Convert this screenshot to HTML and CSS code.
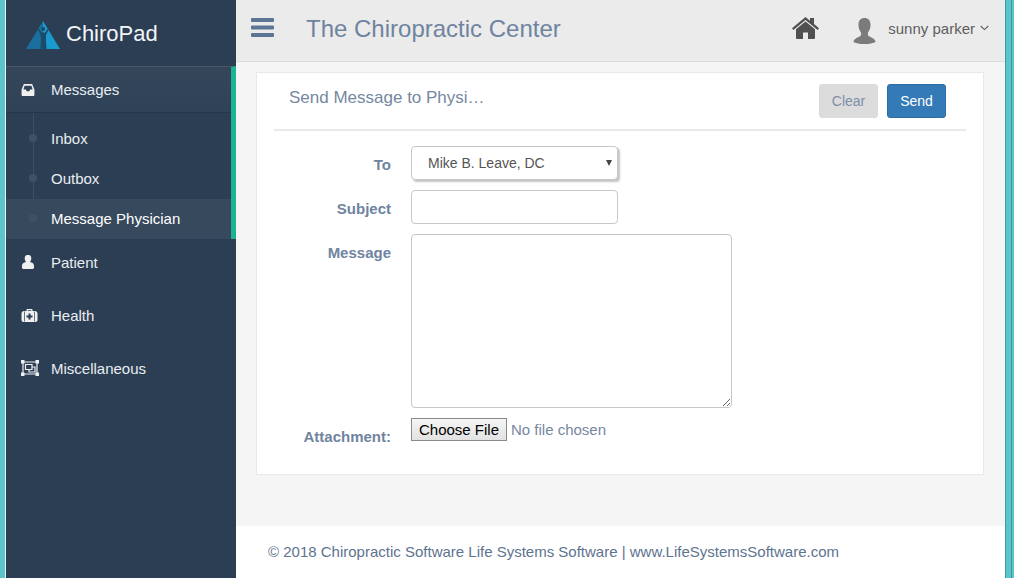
FILE: index.html
```html
<!DOCTYPE html>
<html lang="en">
<head>
<meta charset="utf-8">
<title>ChiroPad</title>
<link rel="stylesheet" href="styles.css">
</head>
<body>
<div class="desktop">
  <div class="edge edge-left"></div>
  <aside class="sidebar">
    <div class="brand">
      <svg class="logo" viewBox="0 0 34 28" aria-hidden="true">
        <path d="M17 0L34 28H16z" fill="#1a9bd0"/>
        <path d="M17 0L0 28H17z" fill="#1a6f9f"/>
        <circle cx="17.200" cy="8" r="1.900" fill="#1d4a68"/>
        <path d="M12.500 7L15.500 11.500H19L22.500 7L23 8L20 14L20 19L20.500 28H14.500L15 19L14.500 14L12 8Z" fill="#1d4a68"/>
      </svg>
      <span class="brand-name">ChiroPad</span>
    </div>
    <nav>
      <div class="group">
        <a class="item item-open">
          <svg class="icon icon-inbox" viewBox="0 0 16 14" aria-hidden="true"><path fill-rule="evenodd" d="M3.200 0H12.800L15.500 6.500V12.500C15.500 13.300 14.900 14 14 14H2C1.100 14 .5 13.300 .5 12.500V6.500ZM4 2L2.600 6.500H5.500L6.500 8.500H9.500L10.500 6.500H13.400L12 2Z" fill="#f0f0f0"/></svg>
          <span>Messages</span>
        </a>
        <div class="sub">
          <a class="sub-item"><i class="dot"></i><span>Inbox</span></a>
          <a class="sub-item"><i class="dot"></i><span>Outbox</span></a>
          <a class="sub-item sub-active"><i class="dot"></i><span>Message Physician</span></a>
        </div>
      </div>
      <a class="item">
        <svg class="icon" viewBox="0 0 16 14" aria-hidden="true"><path d="M6.200 0H7.800C9.500 0 10.300 1.500 10.300 3.200C10.300 5 9.600 6.300 8.800 7C11.500 7.300 13 8.500 13 11V12.500C13 13.400 12.300 14 11.500 14H2.500C1.700 14 1 13.400 1 12.500V11C1 8.500 2.500 7.300 5.200 7C4.400 6.300 3.700 5 3.700 3.200C3.700 1.500 4.500 0 6.200 0Z" fill="#f0f0f0"/></svg>
        <span>Patient</span>
      </a>
      <a class="item">
        <svg class="icon icon-health" viewBox="0 0 16 13" aria-hidden="true"><path fill-rule="evenodd" d="M5 2V1C5 .4 5.400 0 6 0H10C10.600 0 11 .4 11 1V2H13.500C14.900 2 16 3 16 4.500V11C16 12.200 15 13 14 13H2C1 13 0 12.200 0 11V4.500C0 3 1.100 2 2.500 2ZM6.200 1.200V2H9.800V1.200ZM7 4.500V6.500H5V8.500H7V10.500H9V8.500H11V6.500H9V4.500ZM2.800 2.500V12.500H3.500V2.500ZM12.500 2.500V12.500H13.200V2.500Z" fill="#f0f0f0"/></svg>
        <span>Health</span>
      </a>
      <a class="item">
        <svg class="icon icon-wide" viewBox="0 0 18 16" aria-hidden="true"><path fill="none" stroke="#f0f0f0" stroke-width="1.200" d="M2 2H16V14H2ZM4.500 4.500H11V9.500H4.500ZM8 9.500V12H14V7H11"/><path fill="#f0f0f0" d="M0 0H3.500V3.500H0ZM14.500 0H18V3.500H14.500ZM0 12.500H3.500V16H0ZM14.500 12.500H18V16H14.500Z"/></svg>
        <span>Miscellaneous</span>
      </a>
    </nav>
  </aside>
  <div class="main">
    <header class="topbar">
      <svg class="burger" viewBox="0 0 23 19" aria-hidden="true"><path d="M1 0H22A1 1 0 0 1 23 1V3A1 1 0 0 1 22 4H1A1 1 0 0 1 0 3V1A1 1 0 0 1 1 0ZM1 7.500H22A1 1 0 0 1 23 8.500V10.500A1 1 0 0 1 22 11.500H1A1 1 0 0 1 0 10.500V8.500A1 1 0 0 1 1 7.500ZM1 15H22A1 1 0 0 1 23 16V18A1 1 0 0 1 22 19H1A1 1 0 0 1 0 18V16A1 1 0 0 1 1 15Z" fill="#5b7695"/></svg>
      <h1 class="clinic">The Chiropractic Center</h1>
      <svg class="home" viewBox="0 0 27 22" aria-hidden="true"><path d="M13.500 4.500L4 12.300V21A1 1 0 0 0 5 22H11V15.500H16V22H22A1 1 0 0 0 23 21V12.300Z" fill="#505050"/><path d="M13.500 0L18 3.800V1H22V7.100L27 11.300L25.600 13L13.500 3L1.400 13L0 11.300Z" fill="#505050"/></svg>
      <div class="user">
        <svg class="avatar" viewBox="0 0 24 28" aria-hidden="true"><path d="M12 0C16 0 18.500 2.800 18.500 7.500C18.500 11 17.200 13.500 15.800 15.500C15.500 17 15.600 18.500 16.500 19.500C18.500 21 23 22 24 25.500C22 27 17 28 12 28C7 28 2 27 0 25.500C1 22 5.500 21 7.500 19.500C8.400 18.500 8.500 17 8.200 15.500C6.800 13.500 5.500 11 5.500 7.500C5.500 2.800 8 0 12 0Z" fill="#7b7b7b"/></svg>
        <span class="user-name">sunny parker</span>
        <svg class="caret" viewBox="0 0 9 6" aria-hidden="true"><path d="M.7 1L4.500 4.600L8.300 1" fill="none" stroke="#5e5e5e" stroke-width="1.100"/></svg>
      </div>
    </header>
    <main class="content">
      <section class="card">
        <div class="card-head">
          <h2 class="card-title">Send Message to Physi…</h2>
          <div class="actions">
            <button class="btn btn-clear" type="button">Clear</button>
            <button class="btn btn-send" type="button">Send</button>
          </div>
        </div>
        <form class="form">
          <label class="label">To</label>
          <div class="select-wrap"><select class="field field-select"><option>Mike B. Leave, DC</option></select></div>
          <label class="label">Subject</label>
          <input class="field field-input" type="text">
          <label class="label label-msg">Message</label>
          <textarea class="field field-area"></textarea>
          <label class="label label-file">Attachment:</label>
          <input class="file" type="file">
        </form>
      </section>
    </main>
    <footer class="footer">© 2018 Chiropractic Software Life Systems Software | www.LifeSystemsSoftware.com</footer>
  </div>
  <div class="edge edge-right"></div>
</div>
</body>
</html>
```

FILE: styles.css
```css
* { box-sizing: border-box; }
html, body { margin: 0; height: 100%; overflow: hidden; }
body { font-family: "Liberation Sans", Arial, sans-serif; font-size: 14px; color: #676a6c; background: #fff; }
.desktop { display: flex; height: 578px; }
.edge { flex: none; }
.edge-left { width: 6px; background: linear-gradient(to right, #5cc5cb 0, #5cc5cb 5px, #e8f4f5 5px); }
.edge-right { width: 9px; background: linear-gradient(to right, #3d9aa0 0, #3d9aa0 1px, #5cc5cb 1px, #5cc5cb 6px, #3d9aa0 6px, #3d9aa0 7px, #5cc5cb 7px); }

.sidebar { flex: none; width: 230px; background: #2c3e53; color: #e8edf2; }
.brand { height: 66px; display: flex; align-items: flex-start; padding: 21px 0 0 20px; }
.logo { width: 34px; height: 28px; flex: none; }
.brand-name { margin-left: 6px; font-size: 22px; line-height: 25px; color: #f2f5f8; }
nav { display: flex; flex-direction: column; gap: 7px; }
.group { border-right: 5px solid #1ab394; border-top: 1px solid #49596b; }
.item { display: flex; align-items: center; height: 46px; padding-left: 15px; font-size: 15px; color: #e8edf2; }
.item span { margin-left: 14px; }
.item-open { background: linear-gradient(to bottom, #354659, #2e4258); border-bottom: 1px solid #243649; }
nav > .item:nth-child(2) { margin-top: -7px; }
.icon { width: 16px; height: 14px; flex: none; }
.icon-inbox { width: 14px; height: 12px; margin-right: 2px; }
.icon-health { width: 17px; height: 13px; margin-right: -1px; }
.icon-wide { width: 18px; height: 16px; margin-right: -2px; }
.sub { position: relative; padding-top: 6px; }
.sub::before { content: ""; position: absolute; left: 27px; top: 0; bottom: 0; width: 1px; background: #3c4f64; }
.sub-item { position: relative; display: flex; align-items: center; height: 40px; padding: 0 0 2px 45px; font-size: 15px; color: #e8edf2; }
.sub-active { background: #36495d; color: #fff; }
.dot { position: absolute; left: 23px; top: 15px; width: 8px; height: 8px; border-radius: 50%; background: #3f5165; }

.main { flex: 1; min-width: 0; display: flex; flex-direction: column; background: #f5f5f5; }
.topbar { flex: none; height: 62px; display: flex; align-items: flex-start; background: #ebebeb; border-bottom: 1px solid #dcdcdc; }
.burger { width: 23px; height: 19px; margin: 18px 0 0 15px; flex: none; }
.clinic { margin: 14px 0 0 32px; font-size: 24px; line-height: 30px; font-weight: 400; color: #6f84a0; }
.home { width: 27px; height: 22px; margin: 17px 0 0 auto; flex: none; }
.user { display: flex; align-items: flex-start; margin: 0 16px 0 0; }
.avatar { width: 23px; height: 26px; margin: 18px 0 0 34px; flex: none; }
.user-name { margin: 20px 0 0 12px; line-height: 17px; font-size: 15px; color: #5e5e5e; }
.caret { width: 9px; height: 6px; margin: 25px 0 0 5px; flex: none; }

.content { flex: 1; min-height: 0; padding: 10px 21px 0 20px; }
.card { height: 403px; background: #fff; border: 1px solid #e7eaec; padding: 0 17px; }
.card-head { display: flex; justify-content: space-between; height: 58px; border-bottom: 2px solid #e7eaec; }
.card-title { margin: 15px 0 0 15px; font-size: 17px; line-height: 19px; font-weight: 400; color: #76889f; }
.actions { display: flex; gap: 9px; margin: 11px 20px 0 0; }
.btn { width: 59px; height: 34px; border-radius: 3px; font: 14px "Liberation Sans", Arial, sans-serif; padding: 0; }
.btn-clear { background: #dcdcdc; border: 1px solid #dcdcdc; color: #7d8ea6; }
.btn-send { background: #337ab7; border: 1px solid #2e6da4; color: #fff; }

.form { display: grid; grid-template-columns: 117px 207px; grid-template-rows: 34px 34px 174px auto; gap: 10px 20px; padding-top: 15px; }
.label { justify-self: end; align-self: center; margin-top: 2px; font-weight: 700; font-size: 15px; color: #6f84a0; }
.label-msg { align-self: start; margin-top: 10px; }
.label-file { align-self: start; margin-top: 10px; }
.field { display: block; border: 1px solid #c8c8c8; border-radius: 4px; background: #fff; font: 14px "Liberation Sans", Arial, sans-serif; color: #555; }
.select-wrap { position: relative; width: 207px; height: 34px; }
.select-wrap::after { content: ""; position: absolute; right: 6px; top: 14px; border-left: 3.500px solid transparent; border-right: 3.500px solid transparent; border-top: 6px solid #444; pointer-events: none; }
.field-select { width: 207px; height: 34px; padding: 0 0 0 16px; appearance: none; box-shadow: 2px 2px 2px #c4c4c4; }
.field-input { width: 207px; height: 34px; }
.field-area { width: 321px; height: 174px; }
.file { width: 300px; font: 15px "Liberation Sans", Arial, sans-serif; color: #76889f; }
.file::file-selector-button { width: 96px; height: 23px; padding: 0; margin-right: 4px; border: 1px solid #8a8a8a; border-radius: 0; background: linear-gradient(#f5f5f5, #e2e2e2); color: #000; font: inherit; }

.footer { flex: none; height: 52px; display: flex; align-items: center; padding: 0 0 2px 32px; background: #fff; color: #5e7390; font-size: 15px; }
```
